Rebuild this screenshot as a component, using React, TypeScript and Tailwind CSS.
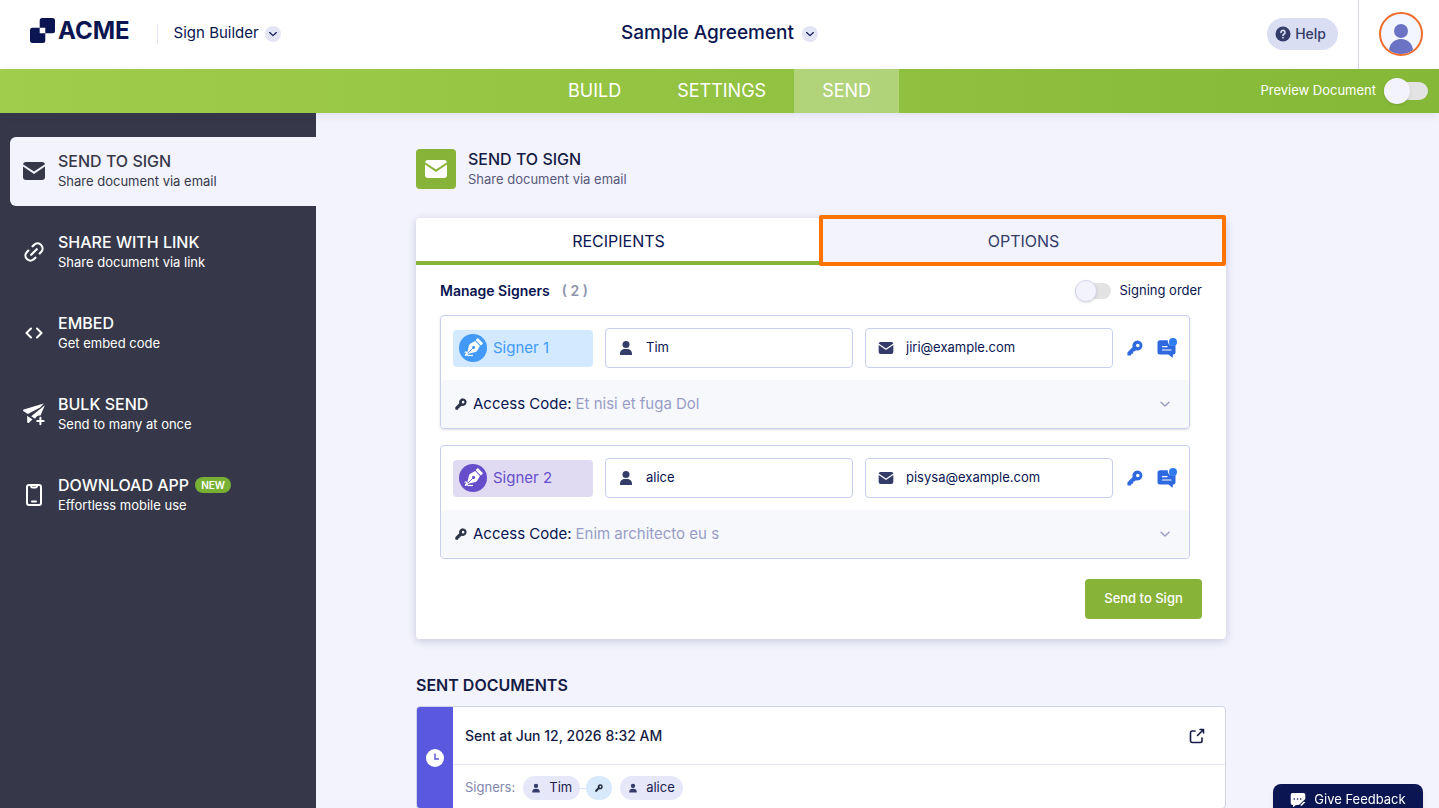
import React, { useState } from "react";

type IconProps = { className?: string };

const EnvelopeIcon = ({ className }: IconProps) => (
  <svg viewBox="0 0 24 24" className={className} fill="currentColor" aria-hidden="true">
    <path d="M4 3h16c1.4 0 2.6.9 3 2.2L12 12.6 1 5.2C1.400 3.900 2.600 3 4 3z" />
    <path d="M1 7.600l11 7.400 11-7.400V18a3 3 0 0 1-3 3H4a3 3 0 0 1-3-3z" />
  </svg>
);

const LinkIcon = ({ className }: IconProps) => (
  <svg viewBox="0 0 24 24" className={className} fill="none" stroke="currentColor" strokeWidth="2.200" strokeLinecap="round" strokeLinejoin="round" aria-hidden="true">
    <g transform="rotate(-45 12 12)">
      <path d="M9 17H7A5 5 0 0 1 7 7h2M15 7h2a5 5 0 0 1 0 10h-2M8 12h8" />
    </g>
  </svg>
);

const EmbedIcon = ({ className }: IconProps) => (
  <svg viewBox="0 0 24 24" className={className} fill="none" stroke="currentColor" strokeWidth="2" strokeLinecap="round" strokeLinejoin="round" aria-hidden="true">
    <path d="M9 7.500L4.500 12 9 16.500M15 7.500l4.500 4.500-4.500 4.500" />
  </svg>
);

const BulkSendIcon = ({ className }: IconProps) => (
  <svg viewBox="0 0 24 24" className={className} fill="currentColor" aria-hidden="true">
    <path d="M21.800 1.600L1.800 7.400c-.9.3-1 1.400-.2 1.900l4.200 2.600L18.200 5.400z" />
    <path d="M22.900 3.200L9.200 14.300l4 2.400c.7-1.700 2-2.900 3.700-3.200h1.600z" />
    <path d="M5.200 13.800l5.300 3.600-3.600 3.300c-.6.5-1.700.1-1.700-.8z" />
    <path d="M18.400 15.800v6.400M15.200 19h6.400" stroke="currentColor" strokeWidth="2" strokeLinecap="round" />
  </svg>
);

const PhoneIcon = ({ className }: IconProps) => (
  <svg viewBox="0 0 24 24" className={className} fill="none" stroke="currentColor" strokeWidth="2" strokeLinecap="round" strokeLinejoin="round" aria-hidden="true">
    <rect x="5" y="2" width="14" height="20" rx="2" />
    <path d="M9 2.500c0 1.200.6 2 1.600 2h2.800c1 0 1.600-.8 1.600-2M10 18.500h4" />
  </svg>
);

const ChevronIcon = ({ className }: IconProps) => (
  <svg viewBox="0 0 12 12" className={className} fill="none" stroke="currentColor" strokeWidth="1.400" strokeLinecap="round" strokeLinejoin="round" aria-hidden="true">
    <path d="M2 4.200L6 8l4-3.800" />
  </svg>
);

const UserIcon = ({ className }: IconProps) => (
  <svg viewBox="0 0 16 16" className={className} fill="currentColor" aria-hidden="true">
    <circle cx="8" cy="4.500" r="3.500" />
    <path d="M2 15v-1.200C2 11 4.200 9 7 9h2c2.800 0 5 2 5 4.800V15z" />
  </svg>
);

const KeyIcon = ({ className }: IconProps) => (
  <svg viewBox="0 0 16 16" className={className} fill="currentColor" aria-hidden="true">
    <path fillRule="evenodd" d="M10.500.5a5 5 0 0 0-4.800 6.500L.8 11.900c-.3.300-.4.600-.4 1V15c0 .4.300.6.600.6h2.500c.5 0 .8-.3.800-.8v-1.100h1.200c.4 0 .7-.3.700-.7v-1.400h1.100l1.700-1.300A5 5 0 1 0 10.500.5zm.3 6.800a1.800 1.800 0 1 1 0-3.600 1.800 1.800 0 0 1 0 3.600z" />
  </svg>
);

const MessageIcon = ({ className }: IconProps) => (
  <svg viewBox="0 0 20 20" className={className} aria-hidden="true">
    <path fill="#2e69e0" d="M3 2.200h7.800c-.3 3.300 2.200 5.600 5.200 5.500.9 0 1.800-.3 2.500-.7V14.500a2 2 0 0 1-2 2h-.7v2.600c0 .4-.4.500-.7.300L11.500 16.500H3a2.500 2.500 0 0 1-2.500-2.500V4.700A2.500 2.500 0 0 1 3 2.200z" />
    <path d="M5.500 8.700h4.500M5.500 12h8.500" stroke="#fff" strokeWidth="1.200" strokeLinecap="round" />
    <circle cx="16" cy="4" r="4" fill="#2e7bf0" />
  </svg>
);

const PenIcon = ({ className }: IconProps) => (
  <svg viewBox="0 0 28 28" className={className} aria-hidden="true">
    <circle cx="14" cy="14" r="14" fill="currentColor" />
    <g transform="rotate(45 14 14)">
      <rect x="10.200" y="3.400" width="7.600" height="3.200" rx=".8" fill="#fff" />
      <path d="M10.600 7.600h6.800l1.500 5.400c.2.700.1 1.400-.2 2L14 22.500 9.300 15c-.3-.6-.4-1.300-.2-2z" fill="#fff" />
      <circle cx="14" cy="13.200" r="1.500" fill="currentColor" />
      <path d="M14 14v7" stroke="currentColor" strokeWidth=".8" />
    </g>
    <path d="M6 18.200c1.200-.6 2 .1 1.500 1.100L6.400 21.400c1.300-.8 2.200-1 2.400-.2.200.7 1.400.4 2 0 .5.500 1.500.4 2.700.2" fill="none" stroke="#fff" strokeWidth="1.200" strokeLinecap="round" strokeLinejoin="round" />
  </svg>
);

const LogoIcon = ({ className }: IconProps) => (
  <svg viewBox="0 0 25 25" className={className} fill="currentColor" aria-hidden="true">
    <path
      fillRule="evenodd"
      d="M12.200 0H22.500A2.500 2.500 0 0 1 25 2.500V12.800A2.500 2.500 0 0 1 22.500 15.300H9.700V2.500A2.500 2.500 0 0 1 12.200 0zM2.500 9.700H15.300V22.500A2.500 2.500 0 0 1 12.800 25H2.500A2.500 2.500 0 0 1 0 22.500V12.200A2.500 2.500 0 0 1 2.500 9.700z"
    />
  </svg>
);

const ExternalIcon = ({ className }: IconProps) => (
  <svg viewBox="0 0 16 16" className={className} fill="none" stroke="currentColor" strokeWidth="1.600" strokeLinecap="round" strokeLinejoin="round" aria-hidden="true">
    <path d="M6 3H3.200a1.700 1.700 0 0 0-1.700 1.700v8.100a1.700 1.700 0 0 0 1.700 1.700h8.100a1.700 1.700 0 0 0 1.700-1.700V10M11 1.500h3.500V5M14 2L8.500 7.500" />
  </svg>
);

const FeedbackIcon = ({ className }: IconProps) => (
  <svg viewBox="0 0 16 16" className={className} aria-hidden="true">
    <path fill="#fff" d="M2.500 1h11A1.800 1.800 0 0 1 15.300 2.800V7L9.500 12.500 8 13H6l-3 2.300V13H2.500A1.800 1.800 0 0 1 .7 11.200V2.800A1.800 1.800 0 0 1 2.500 1z" />
    <path d="M4.200 7h.1M7.500 7h.1M10.700 7h.1" stroke="#0a1551" strokeWidth="1.600" strokeLinecap="round" />
    <path d="M10 14.500l.4-2 3.600-3.600 1.500 1.500-3.600 3.600z" fill="#fff" stroke="#0a1551" strokeWidth=".8" />
  </svg>
);

const HelpIcon = ({ className }: IconProps) => (
  <svg viewBox="0 0 16 16" className={className} aria-hidden="true">
    <circle cx="8" cy="8" r="7.500" fill="currentColor" />
    <path d="M6 6.400a2 2 0 1 1 3.100 1.600c-.7.400-1.100.7-1.100 1.300M8 11.600v.1" fill="none" stroke="#dadef3" strokeWidth="1.700" strokeLinecap="round" />
  </svg>
);

const ClockIcon = ({ className }: IconProps) => (
  <svg viewBox="0 0 18 18" className={className} aria-hidden="true">
    <circle cx="9" cy="9" r="9" fill="#fff" />
    <path d="M9 4.500V10h4" fill="none" stroke="#5b58e0" strokeWidth="1.500" />
  </svg>
);

const Avatar = () => (
  <svg viewBox="0 0 44 44" className="size-11" aria-hidden="true">
    <defs>
      <clipPath id="avatar-clip">
        <circle cx="22" cy="22" r="20" />
      </clipPath>
    </defs>
    <circle cx="22" cy="22" r="21" fill="#f3f6ff" />
    <g clipPath="url(#avatar-clip)" fill="#6c73c5">
      <circle cx="22" cy="19" r="7" />
      <path d="M10 44v-5c0-7 5-12 12-12s12 5 12 12v5z" />
    </g>
    <circle cx="22" cy="22" r="21" fill="none" stroke="#ee6c2c" strokeWidth="2" />
  </svg>
);

const navItems = [
  { title: "SEND TO SIGN", text: "Share document via email", Icon: EnvelopeIcon, active: true },
  { title: "SHARE WITH LINK", text: "Share document via link", Icon: LinkIcon },
  { title: "EMBED", text: "Get embed code", Icon: EmbedIcon },
  { title: "BULK SEND", text: "Send to many at once", Icon: BulkSendIcon },
  { title: "DOWNLOAD APP", text: "Effortless mobile use", Icon: PhoneIcon, isNew: true },
];

const initialSigners = [
  { label: "Signer 1", name: "Tim", email: "jiri@example.com", code: "Et nisi et fuga Dol", tag: "bg-[#d2e9ff] text-[#4299f8]" },
  { label: "Signer 2", name: "alice", email: "pisysa@example.com", code: "Enim architecto eu s", tag: "bg-[#e0dbf2] text-[#664ecb]" },
];

const DropdownBadge = () => (
  <span className="flex size-4 items-center justify-center rounded-full bg-[#e3e5f5] text-[#0a1551]">
    <ChevronIcon className="size-2.5" />
  </span>
);

function Header() {
  return (
    <header className="grid h-[69px] shrink-0 grid-cols-[1fr_auto_1fr] items-center bg-white text-[#0a1551]">
      <div className="flex items-center pb-0.5 pl-[30px]">
        <a href="#" className="flex items-center gap-[3px] pb-1.5">
          <LogoIcon className="size-[25px]" />
          <span className="text-2xl leading-6 font-bold">ACME</span>
        </a>
        <span className="ml-[27px] h-5 w-px bg-[#e3e5f5]" />
        <button type="button" className="ml-4 flex items-center gap-1.5 text-[15px]">
          Sign Builder
          <DropdownBadge />
        </button>
      </div>
      <button type="button" className="flex items-center gap-2 pb-0.5 text-[19px] font-medium">
        Sample Agreement
        <DropdownBadge />
      </button>
      <div className="flex h-full items-center justify-end">
        <button type="button" className="mr-5 mb-0.5 flex h-8 items-center gap-1 rounded-full bg-[#dadef3] pr-3 pl-2 text-sm font-medium text-[#343c6a]">
          <HelpIcon className="size-4" />
          Help
        </button>
        <div className="flex h-full items-center border-l border-[#d5d6ee] pr-4 pb-0.5 pl-5">
          <button type="button" aria-label="Account">
            <Avatar />
          </button>
        </div>
      </div>
    </header>
  );
}

function ModeBar() {
  return (
    <div className="z-10 grid h-11 shrink-0 grid-cols-[1fr_auto_1fr] items-center bg-linear-to-r from-[#a0cd4b] to-[#85b837] text-white shadow-[0_2px_8px_rgba(37,45,91,0.1)]">
      <span />
      <nav className="flex h-full text-lg">
        <a href="#build" className="flex items-center px-7">BUILD</a>
        <a href="#settings" className="flex items-center px-7">SETTINGS</a>
        <a href="#send" className="flex items-center bg-white/30 px-7">SEND</a>
      </nav>
      <label className="flex items-center justify-end gap-2 pr-[11px] text-[13px]">
        Preview Document
        <input
          type="checkbox"
          role="switch"
          className="flex h-[18px] w-11 appearance-none items-center rounded-full bg-[#e3e3e3] before:size-[26px] before:rounded-full before:bg-[#f3f3fe] before:shadow checked:justify-end"
        />
      </label>
    </div>
  );
}

function Sidebar() {
  return (
    <aside className="w-[316px] shrink-0 bg-[#363849] pt-6 pl-2.5 text-white">
      <nav className="flex flex-col gap-3">
        {navItems.map(({ title, text, Icon, active, isNew }) => (
          <a
            key={title}
            href="#"
            className={
              active
                ? "flex min-h-[69px] items-center gap-3 rounded-l-md bg-[#f3f3fe] px-3 pb-0.5 text-[#363849]"
                : "flex min-h-[69px] items-center gap-3 px-3 pb-0.5"
            }
          >
            <Icon className="size-6" />
            <span className="flex flex-col">
              <span className="flex items-center gap-1.5 text-base leading-5 font-medium">
                {title}
                {isNew && (
                  <span className="rounded-full bg-[#78b033] px-1.5 text-[10px] leading-4 font-semibold">NEW</span>
                )}
              </span>
              <span className="text-[13px] leading-5">{text}</span>
            </span>
          </a>
        ))}
      </nav>
    </aside>
  );
}

function SignerCard({ signer, raised }: { signer: (typeof initialSigners)[number]; raised: boolean }) {
  const [name, setName] = useState(signer.name);
  const [email, setEmail] = useState(signer.email);
  return (
    <li className={raised ? "rounded border border-[#c8ceed] shadow-sm" : "rounded border border-[#c8ceed]"}>
      <div className="flex items-center gap-3 p-3">
        <div className={`flex h-[37px] w-[140px] shrink-0 items-center gap-1.5 rounded px-1.5 text-[15px] ${signer.tag}`}>
          <PenIcon className="size-7" />
          {signer.label}
        </div>
        <label className="flex h-10 min-w-0 flex-1 items-center gap-3 rounded border border-[#c8ceed] px-3">
          <UserIcon className="size-4 shrink-0 text-[#343c6a]" />
          <input
            aria-label={`${signer.label} name`}
            value={name}
            onChange={(e) => setName(e.target.value)}
            className="w-full min-w-0 text-[13px] text-[#0a1551] outline-none"
          />
        </label>
        <label className="flex h-10 min-w-0 flex-1 items-center gap-3 rounded border border-[#c8ceed] px-3">
          <EnvelopeIcon className="size-4 shrink-0 text-[#343c6a]" />
          <input
            type="email"
            aria-label={`${signer.label} email`}
            value={email}
            onChange={(e) => setEmail(e.target.value)}
            className="w-full min-w-0 text-[13px] text-[#0a1551] outline-none"
          />
        </label>
        <button type="button" aria-label="Access code" className="flex size-5 items-center justify-center text-[#2e69e0]">
          <KeyIcon className="size-4" />
        </button>
        <button type="button" aria-label="Message" className="size-5">
          <MessageIcon className="size-5" />
        </button>
      </div>
      <button type="button" className="flex h-12 w-full items-center rounded bg-[#f7f8fc] pr-[18px] pl-3.5 text-left text-[15px] text-[#0a1551]">
        <KeyIcon className="mr-1.5 size-3 text-[#2b3245]" />
        Access Code:
        <span className="ml-1 flex-1 text-[#979dc6]">{signer.code}</span>
        <ChevronIcon className="size-3 text-[#979dc6]" />
      </button>
    </li>
  );
}

function RecipientsCard() {
  return (
    <section className="mt-[29px] rounded bg-white shadow-[0_2px_8px_rgba(37,45,91,0.22)]">
      <div role="tablist" className="grid h-[47px] grid-cols-2 text-base">
        <button type="button" role="tab" aria-selected="true" className="rounded-tl border-b-4 border-[#87b338] pt-0.5 text-[#0a1551]">
          RECIPIENTS
        </button>
        <button type="button" role="tab" aria-selected="false" className="relative rounded-tr bg-[#f3f3fe] pb-0.5 text-[#343c6a]">
          OPTIONS
          <span className="absolute -top-[3px] right-0 -bottom-px -left-0.5 rounded-xs border-4 border-[#ff7300]" />
        </button>
      </div>
      <div className="px-6 pt-3.5 pb-5">
        <div className="flex h-6 items-center justify-between text-[#0a1551]">
          <h2 className="flex gap-3 text-sm font-semibold">
            Manage Signers
            <span className="text-[#8d93ab]">( 2 )</span>
          </h2>
          <label className="flex items-center gap-2 text-[13px]">
            <input
              type="checkbox"
              role="switch"
              className="flex h-4 w-9 appearance-none items-center rounded-full bg-[#e3e3e3] before:size-[22px] before:rounded-full before:border before:border-[#d5d6ee] before:bg-[#f3f3fe] before:shadow-sm checked:justify-end"
            />
            Signing order
          </label>
        </div>
        <ul className="mt-3 mr-3 flex flex-col gap-4">
          {initialSigners.map((signer, i) => (
            <SignerCard key={signer.label} signer={signer} raised={i === 0} />
          ))}
        </ul>
        <div className="mt-5 flex justify-end">
          <button type="button" className="h-10 min-w-[117px] rounded bg-[#87b338] px-4 text-[13px] font-medium text-white">
            Send to Sign
          </button>
        </div>
      </div>
    </section>
  );
}

function SignerPill({ name }: { name: string }) {
  return (
    <span className="flex h-6 items-center gap-2 rounded-full bg-[#e6e8fa] px-2 text-[13px] text-[#1b2150]">
      <UserIcon className="size-2.5 text-[#343c6a]" />
      {name}
    </span>
  );
}

function SentDocuments() {
  return (
    <section className="mt-9">
      <h2 className="text-base leading-5 font-semibold text-[#141b44]">SENT DOCUMENTS</h2>
      <article className="mt-[11px] flex overflow-hidden rounded border border-[#cfd3e6] bg-white">
        <div className="flex w-9 shrink-0 items-center justify-center bg-[#5b58e0]">
          <ClockIcon className="size-[18px]" />
        </div>
        <div className="min-w-0 flex-1">
          <div className="flex h-[58px] items-center justify-between border-b border-[#e6e7ef] pr-5 pl-3 text-[#141b44]">
            <h3 className="text-sm font-medium">Sent at Jun 12, 2026 8:32 AM</h3>
            <a href="#document" aria-label="Open document">
              <ExternalIcon className="size-4" />
            </a>
          </div>
          <div className="flex items-center px-3 pt-[11px] pb-2 text-[13px] text-[#8187ad]">
            <span className="mr-2">Signers:</span>
            <SignerPill name="Tim" />
            <span className="h-px w-1.5 bg-[#d7e6fa]" />
            <span className="mr-2 flex h-6 w-[26px] items-center justify-center rounded-full bg-[#d8e9fb] text-[#252b45]">
              <KeyIcon className="size-2" />
            </span>
            <SignerPill name="alice" />
          </div>
        </div>
      </article>
    </section>
  );
}

export default function App() {
  return (
    <div className="flex h-screen flex-col overflow-hidden bg-[#f3f3fe] font-['Inter','Liberation_Sans',sans-serif]">
      <Header />
      <ModeBar />
      <div className="flex min-h-0 flex-1">
        <Sidebar />
        <main className="min-w-0 flex-1 overflow-y-auto pt-9 pr-6 pl-[100px] [scrollbar-width:none]">
          <div className="max-w-[810px]">
            <div className="flex items-center gap-3">
              <span className="flex size-10 items-center justify-center rounded bg-[#87b338] text-white">
                <EnvelopeIcon className="size-6" />
              </span>
              <div>
                <h1 className="text-base leading-5 font-medium text-[#141b44]">SEND TO SIGN</h1>
                <p className="text-[13px] leading-5 text-[#57597a]">Share document via email</p>
              </div>
            </div>
            <RecipientsCard />
            <SentDocuments />
          </div>
        </main>
      </div>
      <button type="button" className="fixed right-4 -bottom-2 z-20 flex h-8 min-w-[150px] items-center justify-center gap-2 rounded-t-lg bg-[#0a1551] px-4 text-[13px] text-white shadow-md">
        <FeedbackIcon className="size-4" />
        Give Feedback
      </button>
    </div>
  );
}
